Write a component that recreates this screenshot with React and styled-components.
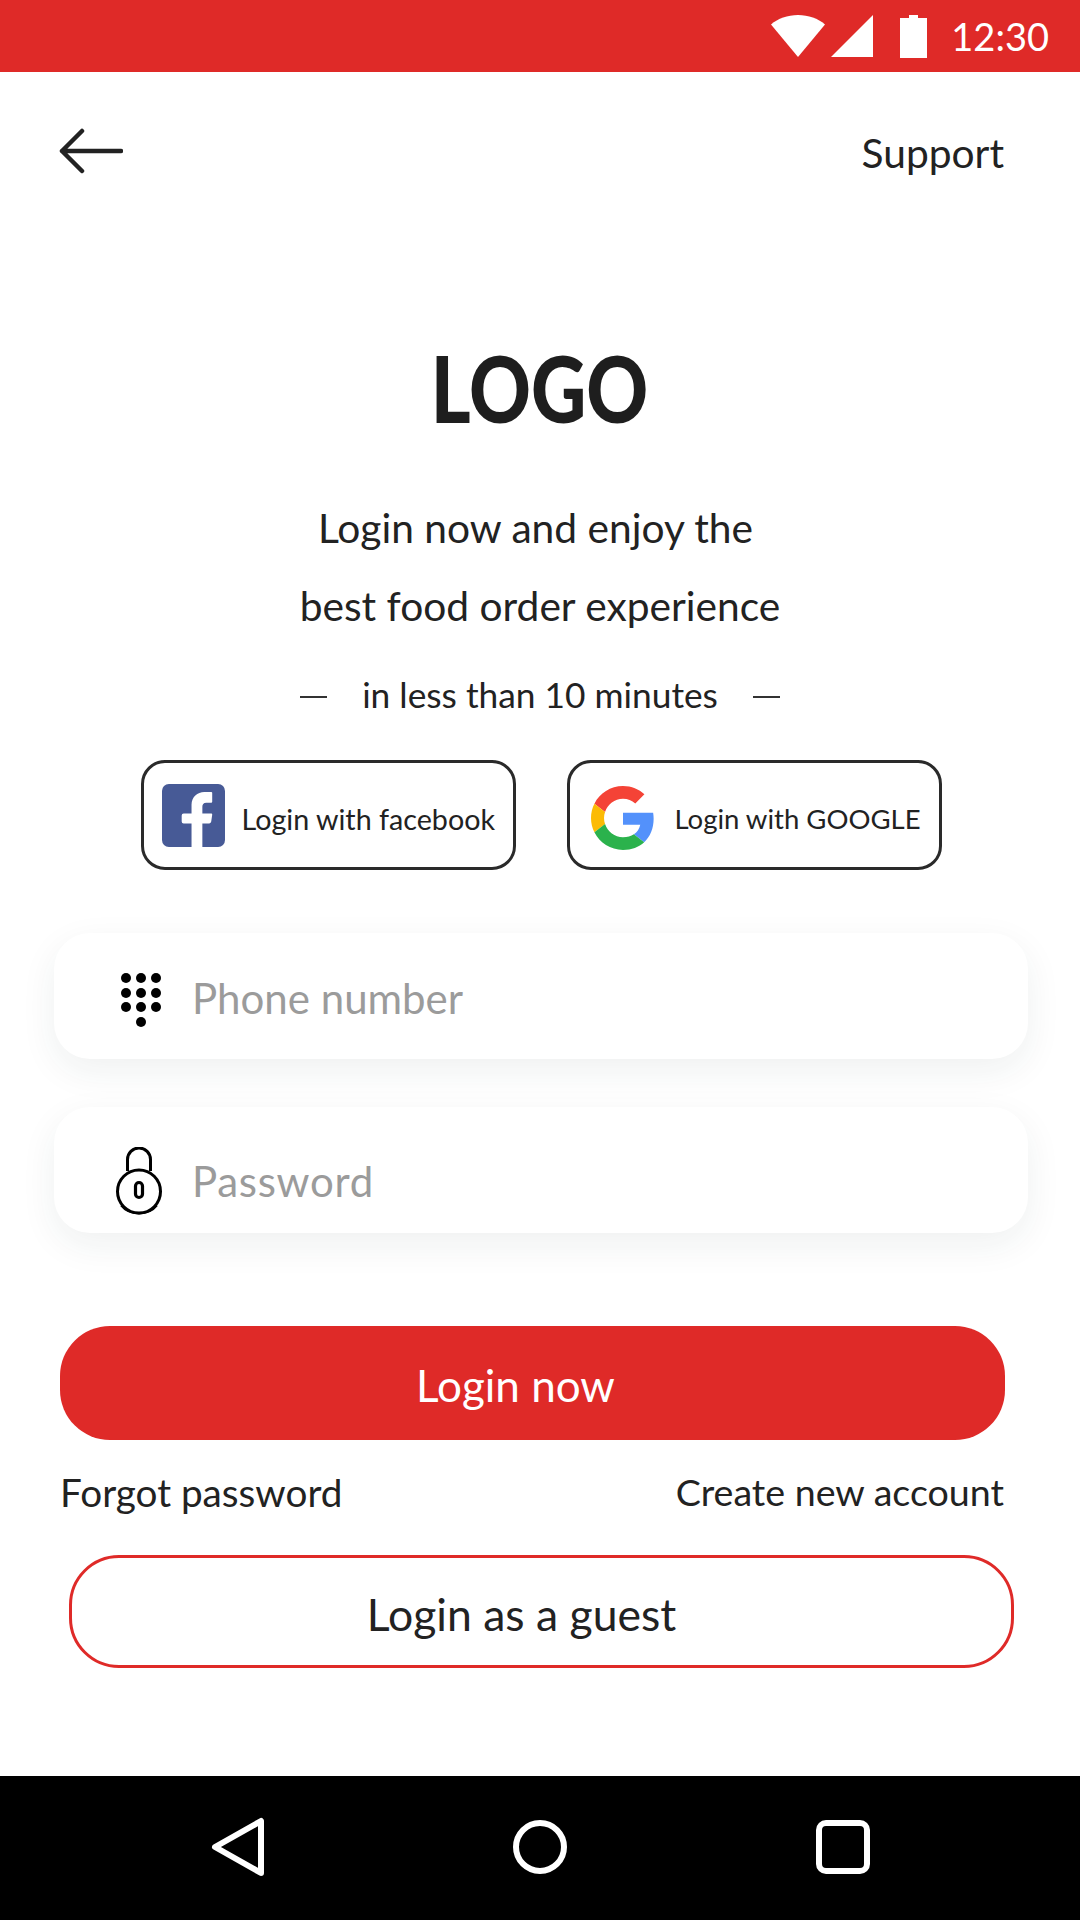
import React from "react";
import styled, { createGlobalStyle } from "styled-components";

const Global = createGlobalStyle`
  html, body { margin: 0; padding: 0; background: #fff; }
  * { box-sizing: border-box; }
  body { font-family: "Lato", "Noto Sans", sans-serif; color: #222; }
`;

const Page = styled.div`
  width: 1080px; height: 1920px; display: flex; flex-direction: column; background: #fff; overflow: hidden;
`;
const StatusBar = styled.div`
  height: 72px; flex: none; background: #df2a28; display: flex; align-items: center; justify-content: flex-end;
  padding-right: 31px; color: #fff;
`;
const StatusIcon = styled.svg`
  display: block; fill: #fff; margin-right: ${p => p.$gap}px;
`;
const Clock = styled.span`
  font-size: 38px; font-weight: 400; line-height: 72px;
`;
const Header = styled.header`
  height: 130px; flex: none; display: flex; align-items: center; justify-content: space-between;
  padding: 30px 76px 0 59px;
`;
const Support = styled.span`
  font-size: 40.700px; font-weight: 400; color: #222;
`;
const Main = styled.main`
  flex: 1; display: flex; flex-direction: column; align-items: center; min-height: 0;
`;
const Logo = styled.h1`
  margin: 133px 0 0; font-size: 91px; line-height: 106px; font-weight: 900; color: #1e1e1e;
  transform: scaleX(0.84);
`;
const Lead = styled.p`
  margin: 48px 0 0; text-align: center; color: #222;
`;
const LeadLine = styled.span`
  display: block; font-size: 40.700px; line-height: 78px; padding-right: ${p => p.$shift || 0}px;
`;
const Sub = styled.div`
  margin-top: 25px; width: 480px; display: flex; justify-content: space-between; align-items: center;
  font-size: 35.300px; line-height: 50px; font-weight: 400; color: #222;
`;
const Dash = styled.i`
  display: block; width: 27px; height: 2px; background: #333; margin-top: 4px;
`;
const SocialRow = styled.div`
  margin-top: 40px; display: flex; gap: 51px; margin-left: 2px;
`;
const SocialButton = styled.button`
  width: 375px; height: 110px; border: 3px solid #2a2a2a; border-radius: 24px; background: #fff; padding: 0 0 0 ${p => p.$pad}px;
  display: flex; align-items: center; gap: ${p => p.$gap}px; font-family: "Lato", sans-serif; font-weight: 400; color: #222; white-space: nowrap;
`;
const SocialLabel = styled.span`
  font-size: ${p => p.$size}px; padding-top: 7px;
`;
const GoogleSvg = styled.svg`
  display: block; margin-top: 5px;
`;
const Field = styled.label`
  margin-top: ${p => p.$top}px; margin-left: 2px; width: 974px; height: 126px; border-radius: 36px; background: #fff; box-shadow: 0 12px 36px rgba(30, 50, 60, 0.07);
  display: flex; align-items: center; flex: none; padding-top: ${p => p.$drop}px;
`;
const FieldIcon = styled.span`
  width: 138px; flex: none; display: flex; justify-content: flex-start; padding-left: ${p => p.$pad}px;
`;
const FieldInput = styled.input`
  flex: 1; min-width: 0; border: 0; outline: 0; background: transparent; font: 400 42px "Lato", sans-serif; color: #222; padding: 0;
  letter-spacing: ${p => p.$track || 0}px;
  &::placeholder { color: #9b9b9b; opacity: 1; }
`;
const KeypadSvg = styled.svg`
  display: block; margin-top: 4px;
`;
const LockSvg = styled.svg`
  display: block;
`;
const Primary = styled.button`
  margin-top: 93px; margin-left: -15px; width: 945px; height: 114px; flex: none; border: 0; border-radius: 50px; background: #df2a28; color: #fff;
  font: 400 44px "Lato", sans-serif; padding: 3px 34px 0 0;
`;
const Links = styled.div`
  margin-top: 27px; width: 944px; margin-left: -16px; display: flex; justify-content: space-between; line-height: 50px; color: #222;
`;
const LinkText = styled.span`
  font-size: ${p => p.$size}px;
`;
const Guest = styled.button`
  margin-top: 38px; margin-left: 3px; width: 945px; height: 113px; flex: none; border: 3px solid #df2a28; border-radius: 50px; background: #fff; color: #222;
  font: 400 44.500px "Lato", sans-serif; padding: 4px 40px 0 0;
`;
const NavBar = styled.nav`
  height: 144px; flex: none; background: #000; display: flex; align-items: center; justify-content: center; padding-bottom: 2px;
`;
const NavSlot = styled.span`
  width: 303px; display: flex; justify-content: center;
`;

const Wifi = () => (
  <StatusIcon $gap={6} width="54" height="42" viewBox="0 0 54 42"><path d="M27 42 0 9.500C7 3.500 16.500 0 27 0s20 3.500 27 9.500z" /></StatusIcon>
);
const Signal = () => (
  <StatusIcon $gap={27} width="42" height="42" viewBox="0 0 42 42"><path d="M42 0v42H0z" /></StatusIcon>
);
const Battery = () => (
  <StatusIcon $gap={24} width="27" height="43" viewBox="0 0 27 43"><path d="M9 0h9v3h9v40H0V3h9z" /></StatusIcon>
);
const BackArrow = () => (
  <svg width="64" height="48" viewBox="0 0 64 48" fill="none" stroke="#222" strokeWidth="4.500" strokeLinecap="round" strokeLinejoin="round">
    <path d="M62 23H3M23 3 3 23l20 20" />
  </svg>
);
const FacebookIcon = () => (
  <svg width="63" height="63" viewBox="0 0 64 64">
    <rect width="64" height="64" rx="7" fill="#475a96" />
    <path d="M30 64V40h-8a2 2 0 0 1-2-2v-6a2 2 0 0 1 2-2h8v-9C30 13 36 8 43 8h7a1 1 0 0 1 1 1v9a1 1 0 0 1-1 1h-5c-3 0-4 2-4 4v7h9a1 1 0 0 1 1 1.200l-1 7a2 2 0 0 1-2 1.800h-7v24z" fill="#fff" />
  </svg>
);
const GoogleIcon = () => (
  <GoogleSvg width="64" height="64" viewBox="0 0 48 48">
    <path fill="#f44336" d="M24 9.500c3.540 0 6.710 1.220 9.210 3.600l6.850-6.850C35.900 2.380 30.470 0 24 0 14.620 0 6.510 5.380 2.560 13.220l7.980 6.190C12.430 13.720 17.740 9.500 24 9.500z" />
    <path fill="#5391fb" d="M46.980 24.550c0-1.570-.15-3.090-.38-4.550H24v9.020h12.940c-.58 2.960-2.260 5.480-4.780 7.180l7.730 6c4.510-4.180 7.090-10.360 7.090-17.650z" />
    <path fill="#fcbb05" d="M10.530 28.590c-.48-1.450-.76-2.990-.76-4.590s.27-3.140.76-4.590l-7.980-6.190C.92 16.460 0 20.120 0 24c0 3.880.92 7.540 2.560 10.780l7.970-6.190z" />
    <path fill="#2bb24c" d="M24 48c6.480 0 11.930-2.130 15.890-5.810l-7.730-6c-2.150 1.450-4.920 2.300-8.160 2.300-6.260 0-11.570-4.220-13.470-9.910l-7.980 6.190C6.510 42.620 14.620 48 24 48z" />
  </GoogleSvg>
);
const KeypadIcon = () => (
  <KeypadSvg width="40" height="54" viewBox="0 0 40 54" fill="#000">
    {[5, 20, 34].flatMap(y => [5, 20, 35].map(x => <circle key={`${x}-${y}`} cx={x} cy={y} r="5" />))}
    <circle cx="20" cy="49" r="5" />
  </KeypadSvg>
);
const LockIcon = () => (
  <LockSvg width="46" height="68" viewBox="0 0 46 68" fill="none" stroke="#000" strokeWidth="3">
    <path d="M11.500 24V12.500a11.500 11.500 0 0 1 23 0V24" />
    <circle cx="23" cy="44.500" r="21.500" />
    <path d="M5 58.500C9 63.500 15.500 66.500 23 66.500s14-3 18-8" strokeWidth="2" />
    <rect x="19.500" y="35.500" width="7" height="15" rx="3.500" strokeWidth="3.200" />
  </LockSvg>
);
const NavBack = () => (
  <svg width="54" height="60" viewBox="0 0 54 60" fill="none" stroke="#fff" strokeWidth="6" strokeLinejoin="round">
    <path d="M51 4v52L5 30z" />
  </svg>
);
const NavHome = () => (
  <svg width="54" height="54" viewBox="0 0 54 54" fill="none" stroke="#fff" strokeWidth="6"><circle cx="27" cy="27" r="24" /></svg>
);
const NavRecent = () => (
  <svg width="54" height="54" viewBox="0 0 54 54" fill="none" stroke="#fff" strokeWidth="6"><rect x="3" y="3" width="48" height="48" rx="7" /></svg>
);

export default function App() {
  return (
    <Page>
      <Global />
      <StatusBar>
        <Wifi />
        <Signal />
        <Battery />
        <Clock>12:30</Clock>
      </StatusBar>
      <Header>
        <BackArrow />
        <Support>Support</Support>
      </Header>
      <Main>
        <Logo>LOGO</Logo>
        <Lead>
          <LeadLine $shift={9}>Login now and enjoy the</LeadLine>
          <LeadLine>best food order experience</LeadLine>
        </Lead>
        <Sub><Dash />in less than 10 minutes<Dash /></Sub>
        <SocialRow>
          <SocialButton $pad={18} $gap={17}><FacebookIcon /><SocialLabel $size={28.7}>Login with facebook</SocialLabel></SocialButton>
          <SocialButton $pad={21} $gap={20}><GoogleIcon /><SocialLabel $size={27.5}>Login with GOOGLE</SocialLabel></SocialButton>
        </SocialRow>
        <Field $top={63} $drop={4}>
          <FieldIcon $pad={67}><KeypadIcon /></FieldIcon>
          <FieldInput placeholder="Phone number" />
        </Field>
        <Field $top={48} $drop={22}>
          <FieldIcon $pad={62}><LockIcon /></FieldIcon>
          <FieldInput $track={0.7} placeholder="Password" />
        </Field>
        <Primary>Login now</Primary>
        <Links><LinkText $size={38.7}>Forgot password</LinkText><LinkText $size={37.6}>Create new account</LinkText></Links>
        <Guest>Login as a guest</Guest>
      </Main>
      <NavBar>
        <NavSlot><NavBack /></NavSlot>
        <NavSlot><NavHome /></NavSlot>
        <NavSlot><NavRecent /></NavSlot>
      </NavBar>
    </Page>
  );
}
